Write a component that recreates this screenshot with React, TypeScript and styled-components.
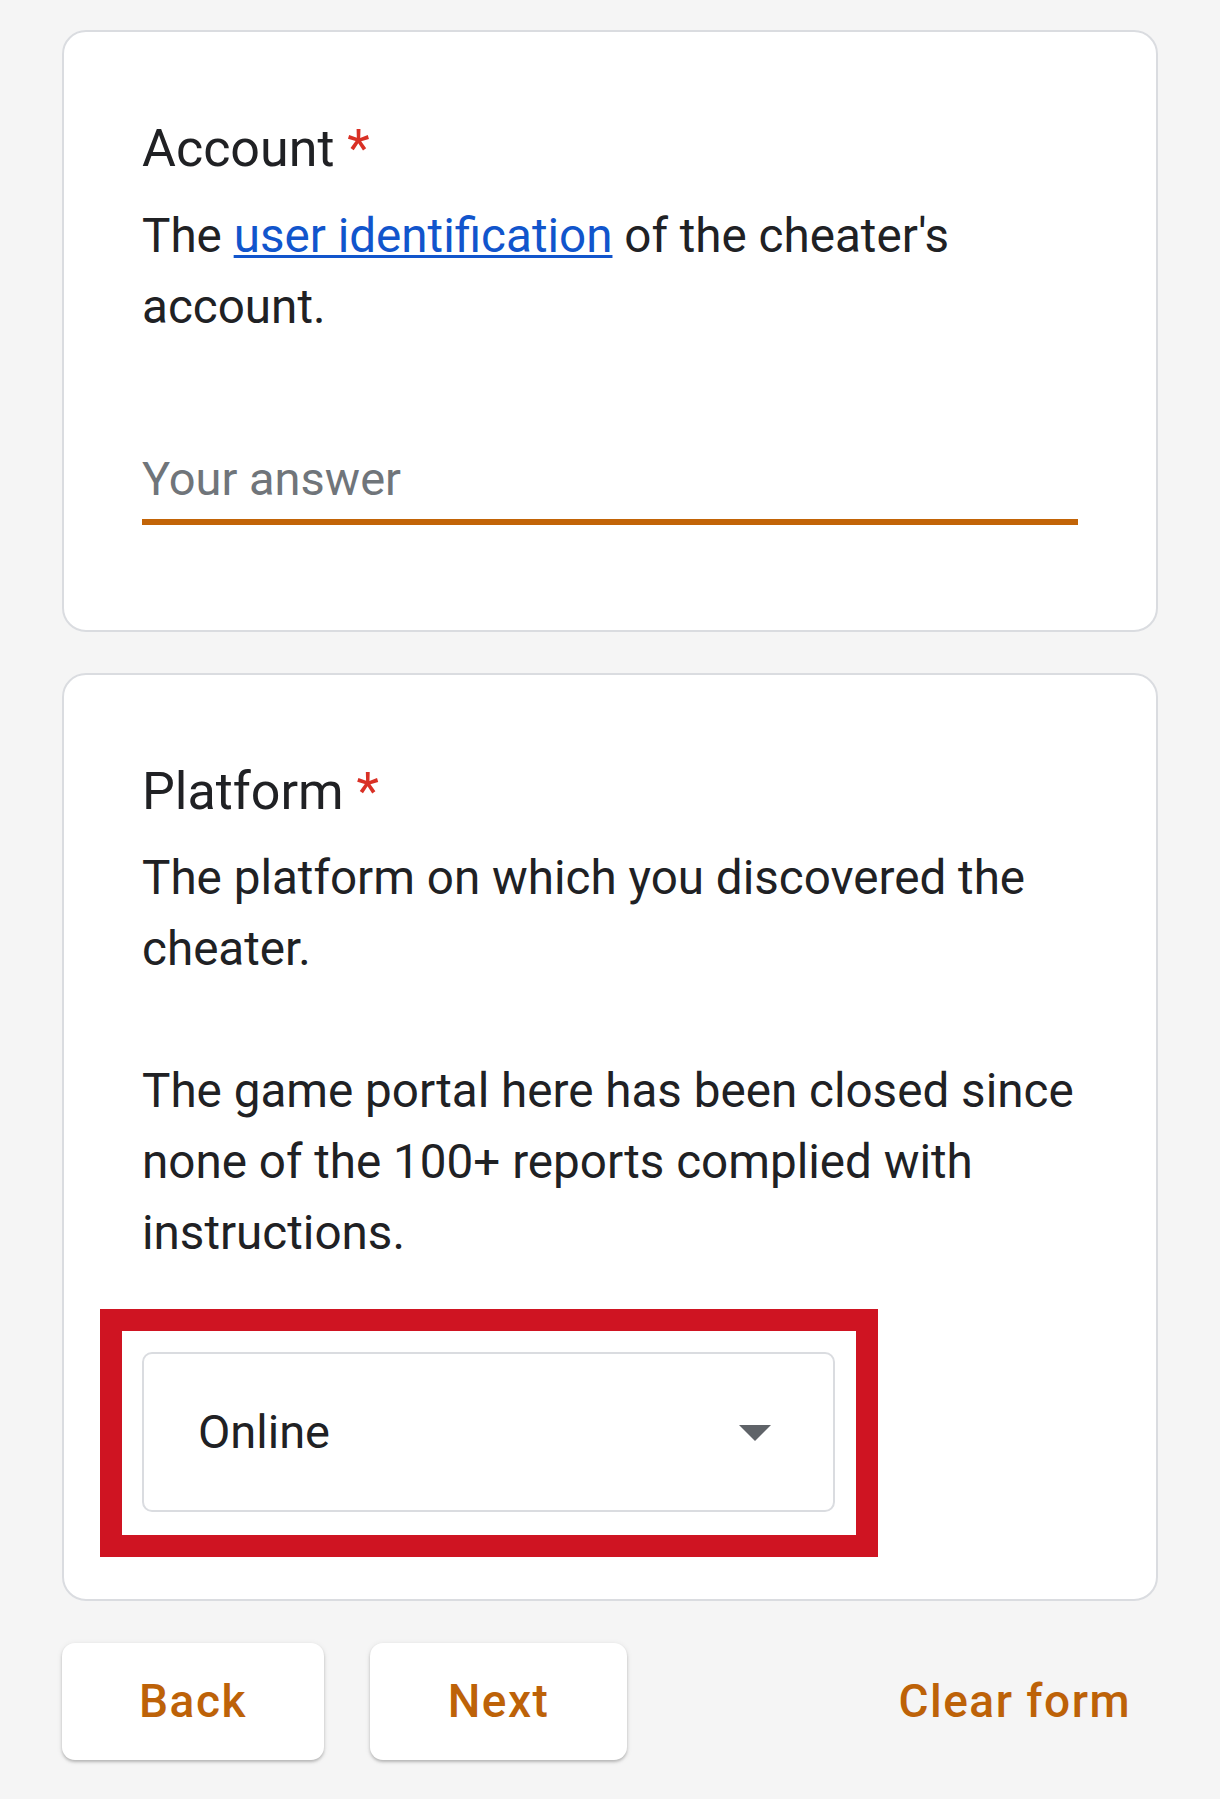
import React from "react";
import styled, { createGlobalStyle } from "styled-components";

const GlobalStyle = createGlobalStyle`
  html, body {
    margin: 0;
    padding: 0;
    background: #f5f5f5;
  }
  body {
    font-family: Roboto, "Noto Sans", Arial, sans-serif;
    color: #202124;
    -webkit-font-smoothing: antialiased;
  }
  * { box-sizing: border-box; }
`;

const Page = styled.main`
  width: 1220px;
  padding: 30px 62px 30px;
  display: flex;
  flex-direction: column;
  background: #f5f5f5;
`;

const Card = styled.section<{ $padBottom: number; $first?: boolean }>`
  background: #ffffff;
  border: 2px solid #dadce0;
  border-radius: 24px;
  padding: 83px 78px ${(p) => p.$padBottom}px;
  margin-top: ${(p) => (p.$first ? 0 : 41)}px;
  display: flex;
  flex-direction: column;
`;

const Title = styled.h2`
  margin: 0;
  font-family: Roboto, "Noto Sans", Arial, sans-serif;
  font-weight: 400;
  font-size: 52px;
  line-height: 68px;
  color: #202124;
`;

const Required = styled.span`
  color: #d93025;
`;

const Description = styled.div`
  margin-top: 17.5px;
  margin-right: -10px;
  font-size: 47.6px;
  line-height: 71px;
  color: #202124;
`;

const Paragraph = styled.p<{ $spaced?: boolean }>`
  margin: ${(p) => (p.$spaced ? "71px" : "0")} 0 0;
`;

const Link = styled.a`
  color: #1155cc;
  text-decoration: underline;
  text-decoration-thickness: 3px;
  text-underline-offset: 3px;
`;

const AnswerInput = styled.input`
  display: block;
  width: 100%;
  height: 76px;
  margin-top: 106px;
  padding: 0 0 10px;
  border: none;
  border-bottom: 6px solid #c26407;
  outline: none;
  background: transparent;
  font-family: Roboto, "Noto Sans", Arial, sans-serif;
  font-size: 47px;
  color: #202124;

  &::placeholder {
    color: #70757a;
    opacity: 1;
  }
`;

const Select = styled.div`
  position: relative;
  margin-top: 82.5px;
  width: 693px;
  height: 160px;
  border: 2px solid #dadce0;
  border-radius: 10px;
  display: flex;
  align-items: center;
  justify-content: space-between;
  padding: 0 62px 0 54px;
  font-size: 47px;
  color: #202124;

  /* red annotation frame drawn over the screenshot */
  &::before {
    content: "";
    position: absolute;
    top: -45px;
    bottom: -47px;
    left: -44px;
    right: -45px;
    border: 22px solid #cf1422;
    pointer-events: none;
  }
`;

const Caret = styled.svg`
  width: 32px;
  height: 16px;
  flex: none;
  margin-top: 2px;
`;

const Actions = styled.nav`
  margin-top: 42px;
  display: flex;
  align-items: center;
`;

const ActionButton = styled.button<{ $width: number }>`
  width: ${(p) => p.$width}px;
  height: 117px;
  margin-right: 46px;
  border: none;
  border-radius: 13px;
  background: #ffffff;
  box-shadow: 0 2px 3px rgba(0, 0, 0, 0.22), 0 1px 6px rgba(0, 0, 0, 0.08);
  font-family: Roboto, "Noto Sans", Arial, sans-serif;
  font-weight: 500;
  font-size: 46px;
  letter-spacing: 1.5px;
  color: #bd6208;
  padding: 0;
  cursor: pointer;
`;

const TextButton = styled.button`
  margin-left: auto;
  height: 117px;
  padding: 0 27px;
  border: none;
  background: transparent;
  font-family: Roboto, "Noto Sans", Arial, sans-serif;
  font-weight: 500;
  font-size: 46px;
  letter-spacing: 1.5px;
  color: #bd6208;
  cursor: pointer;
`;

export default function App() {
  return (
    <>
      <GlobalStyle />
      <Page>
        <Card $first $padBottom={105}>
          <Title>
            Account <Required>*</Required>
          </Title>
          <Description>
            <Paragraph>
              The <Link href="#">user identification</Link> of the cheater's
              account.
            </Paragraph>
          </Description>
          <AnswerInput type="text" placeholder="Your answer" />
        </Card>

        <Card $padBottom={87}>
          <Title>
            Platform <Required>*</Required>
          </Title>
          <Description>
            <Paragraph>The platform on which you discovered the cheater.</Paragraph>
            <Paragraph $spaced>
              The game portal here has been closed since none of the 100+
              reports complied with instructions.
            </Paragraph>
          </Description>
          <Select role="button" aria-haspopup="listbox">
            <span>Online</span>
            <Caret viewBox="0 0 32 16" aria-hidden="true">
              <polygon points="0,0 32,0 16,16" fill="#5f6368" />
            </Caret>
          </Select>
        </Card>

        <Actions>
          <ActionButton $width={262}>Back</ActionButton>
          <ActionButton $width={257}>Next</ActionButton>
          <TextButton>Clear form</TextButton>
        </Actions>
      </Page>
    </>
  );
}
